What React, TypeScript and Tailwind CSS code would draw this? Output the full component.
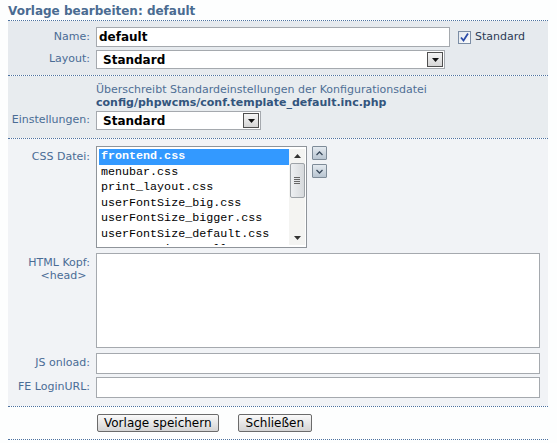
const labelCls = "w-[83px] shrink-0 text-right text-[#4a6c95] pr-[1px]";

function SelectBox({ value, width }: { value: string; width: string }) {
  return (
    <div className={`${width} h-[19px] bg-white border border-[#a5a9ae] flex items-center justify-between pl-[6px] pr-[1px]`}>
      <span className="font-bold text-[12px] text-black">{value}</span>
      <span className="w-[16px] h-[15px] border border-[#4f4f4f] bg-gradient-to-b from-[#f4f4f4] to-[#d6d6d6] flex items-center justify-center">
        <svg width="7" height="4" viewBox="0 0 7 4">
          <path d="M0 0h7L3.5 4z" fill="#111" />
        </svg>
      </span>
    </div>
  );
}

function Dotted() {
  return <div className="h-0 border-t border-dotted border-[#4d72a0]" />;
}

const cssFiles = [
  "frontend.css",
  "menubar.css",
  "print_layout.css",
  "userFontSize_big.css",
  "userFontSize_bigger.css",
  "userFontSize_default.css",
  "userFontSize_small.css",
];

export default function App() {
  return (
    <div className="w-[557px] h-[443px] bg-[#fdfefe] overflow-hidden font-['DejaVu_Sans',Verdana,sans-serif] text-[11px]">
      <div className="w-[540px] ml-[8px]">
        {/* title */}
        <div className="h-[20px] pt-[4px] font-bold text-[12px] leading-[14px] text-[#4a6b91]">
          Vorlage bearbeiten: default
        </div>
        <Dotted />

        {/* name / layout */}
        <div className="bg-[#e6eaee] pt-[6px] pb-[6px] flex flex-col gap-[3px]">
          <div className="flex items-center">
            <div className={labelCls}>Name:</div>
            <div className="ml-[5px] w-[354px] h-[20px] bg-white border border-[#a5a9ae] flex items-center pl-[2px]">
              <span className="font-bold text-[12px] text-black">default</span>
            </div>
            <div className="ml-[8px] w-[13px] h-[13px] border border-[#7b8da5] bg-gradient-to-br from-[#e2e7ee] to-[#fbfcfd] flex items-center justify-center">
              <svg width="9" height="9" viewBox="0 0 9 9">
                <path d="M1 4.5l2.5 3L8 0.5" stroke="#2a4ba8" strokeWidth="1.8" fill="none" />
              </svg>
            </div>
            <span className="ml-[4px] text-[#2c3a55]">Standard</span>
          </div>
          <div className="flex items-center">
            <div className={labelCls}>Layout:</div>
            <div className="ml-[5px]">
              <SelectBox value="Standard" width="w-[349px]" />
            </div>
          </div>
        </div>
        <Dotted />

        {/* einstellungen */}
        <div className="bg-[#e8ecef] pt-[7px] pb-[8px]">
          <div className="ml-[88px] text-[#4f6f95] leading-[13px]">
            Überschreibt Standardeinstellungen der Konfigurationsdatei
          </div>
          <div className="ml-[88px] font-bold text-[#33557d] leading-[13px]">
            config/phpwcms/conf.template_default.inc.php
          </div>
          <div className="flex items-center mt-[2px]">
            <div className={labelCls}>Einstellungen:</div>
            <div className="ml-[5px]">
              <SelectBox value="Standard" width="w-[165px]" />
            </div>
          </div>
        </div>
        <Dotted />

        {/* css, html head, js */}
        <div className="bg-[#f1f3f6] pt-[7px] pb-[8px]">
          <div className="flex items-start">
            <div className={`${labelCls} pt-[3px]`}>CSS Datei:</div>
            <div className="ml-[5px] w-[211px] h-[102px] bg-white border border-[#8f949a] flex p-[2px] pr-[1px]">
              <div className="flex-1 overflow-hidden font-['Liberation_Mono','Courier_New',monospace] text-[11.7px]">
                {cssFiles.map((f, i) => (
                  <div
                    key={f}
                    className={
                      i === 0
                        ? "h-[15.5px] leading-[15.5px] pl-[2px] bg-[#3399ff] text-white font-bold"
                        : "h-[15.5px] leading-[15.5px] pl-[2px] text-black"
                    }
                  >
                    {f}
                  </div>
                ))}
              </div>
              <div className="w-[16px] h-full bg-[#f4f4f2] flex flex-col items-center">
                <div className="h-[14px] flex items-center justify-center">
                  <svg width="7" height="4" viewBox="0 0 7 4">
                    <path d="M0 4h7L3.5 0z" fill="#333" />
                  </svg>
                </div>
                <div className="w-[15px] h-[35px] border border-[#9ea3a8] rounded-[2px] bg-gradient-to-r from-[#eef0f2] to-[#d6d9dc] flex flex-col items-center justify-center gap-[1px]">
                  <div className="w-[6px] h-[1px] bg-[#666]" />
                  <div className="w-[6px] h-[1px] bg-[#666]" />
                  <div className="w-[6px] h-[1px] bg-[#666]" />
                  <div className="w-[6px] h-[1px] bg-[#666]" />
                </div>
                <div className="flex-1" />
                <div className="h-[14px] flex items-center justify-center">
                  <svg width="7" height="4" viewBox="0 0 7 4">
                    <path d="M0 0h7L3.5 4z" fill="#333" />
                  </svg>
                </div>
              </div>
            </div>
            <div className="ml-[5px] flex flex-col gap-[4px]">
              <div className="w-[15px] h-[14px] border border-[#7e8b98] rounded-[1px] bg-gradient-to-b from-[#e4eaf0] to-[#b9c5d1] flex items-center justify-center">
                <svg width="7" height="5" viewBox="0 0 7 5">
                  <path d="M0.5 4L3.5 1l3 3" stroke="#3a4a5c" strokeWidth="1.3" fill="none" />
                </svg>
              </div>
              <div className="w-[15px] h-[14px] border border-[#7e8b98] rounded-[1px] bg-gradient-to-b from-[#e4eaf0] to-[#b9c5d1] flex items-center justify-center">
                <svg width="7" height="5" viewBox="0 0 7 5">
                  <path d="M0.5 1L3.5 4l3-3" stroke="#3a4a5c" strokeWidth="1.3" fill="none" />
                </svg>
              </div>
            </div>
          </div>

          <div className="flex items-start mt-[5px]">
            <div className={`${labelCls} pt-[3px] leading-[13px]`}>
              HTML Kopf:
              <br />
              &lt;head&gt;&nbsp;
            </div>
            <div className="ml-[5px] w-[444px] h-[95px] bg-white border border-[#a5a9ae]" />
          </div>

          <div className="flex items-center mt-[5px]">
            <div className={labelCls}>JS onload:</div>
            <div className="ml-[5px] w-[444px] h-[21px] bg-white border border-[#a5a9ae]" />
          </div>

          <div className="flex items-center mt-[3px]">
            <div className={labelCls}>FE LoginURL:</div>
            <div className="ml-[5px] w-[444px] h-[21px] bg-white border border-[#a5a9ae]" />
          </div>
        </div>
        <Dotted />

        {/* buttons */}
        <div className="h-[32px] flex items-center pl-[89px] gap-[19px]">
          <button className="h-[18px] px-[6px] border border-[#6b6b6b] rounded-[2px] bg-gradient-to-b from-[#fafafa] to-[#d4d4d4] text-[12px] leading-[14px] text-black">
            Vorlage speichern
          </button>
          <button className="h-[18px] px-[7px] border border-[#6b6b6b] rounded-[2px] bg-gradient-to-b from-[#fafafa] to-[#d4d4d4] text-[12px] leading-[14px] text-black">
            Schließen
          </button>
        </div>
        <Dotted />
      </div>
    </div>
  );
}
